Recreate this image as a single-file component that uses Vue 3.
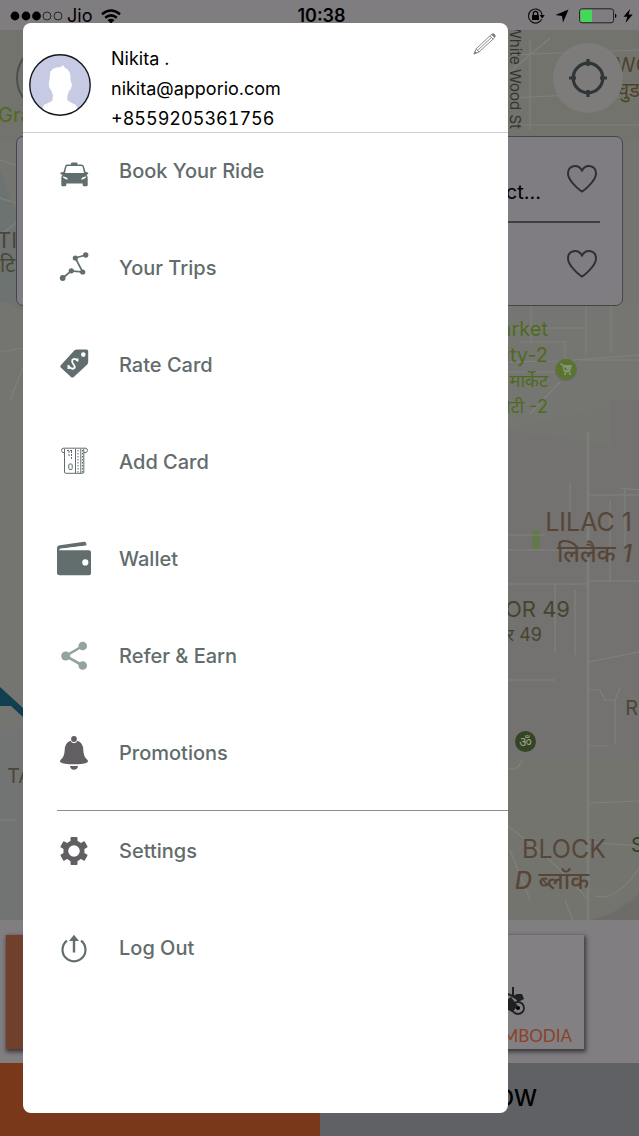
<script setup>
import { ref } from 'vue'

const user = { name: 'Nikita .', email: 'nikita@apporio.com', phone: '+8559205361756' }

const mainItems = [
  { id: 'taxi', label: 'Book Your Ride' },
  { id: 'trips', label: 'Your Trips' },
  { id: 'tag', label: 'Rate Card' },
  { id: 'card', label: 'Add Card' },
  { id: 'wallet', label: 'Wallet' },
  { id: 'share', label: 'Refer & Earn' },
  { id: 'bell', label: 'Promotions' },
]
const accountItems = [
  { id: 'gear', label: 'Settings' },
  { id: 'logout', label: 'Log Out' },
]
const groups = [mainItems, accountItems]
const active = ref('')
</script>

<template>
  <div class="screen">
    <header class="status">
      <div class="status-left">
        <svg class="dots" width="54" height="12" viewBox="0 0 54 12">
          <circle cx="5" cy="6" r="4.4" /><circle cx="16" cy="6" r="4.4" /><circle cx="26.500" cy="6" r="4.400" />
          <g fill="none" stroke="#111" stroke-width=".8"><circle cx="37" cy="6" r="4" /><circle cx="48" cy="6" r="4" /></g>
        </svg>
        <span>Jio</span>
        <svg class="wifi" width="20" height="15" viewBox="0 0 20 15">
          <g fill="none" stroke="#000" stroke-width="2.500"><path d="M1 5.200Q10-2.300 19 5.200" /><path d="M4.200 8.800Q10 4 15.800 8.800" /></g>
          <path d="M6.500 11Q10 8.300 13.500 11L10 14.600Z" />
        </svg>
      </div>
      <time>10:38</time>
      <div class="status-right">
        <svg width="18" height="16" viewBox="0 0 18 16">
          <path d="M14.500 4.500A7 7 0 1 0 14.700 11.200M15 8.500A7 7 0 0 0 14 4" fill="none" stroke="#111" stroke-width="1.200" />
          <path d="M12.700 7h5l-2.500 3.400Z" /><rect x="5" y="7" width="7" height="5" rx=".6" />
          <path d="M6.300 7.500V5.600a2.200 2.200 0 0 1 4.400 0V7.500" fill="none" stroke="#000" stroke-width="1.300" />
        </svg>
        <svg class="nav-arrow" width="14" height="14" viewBox="0 0 14 14"><path d="M13.500.5L8 13.500 7 7 .5 6Z" /></svg>
        <svg class="battery" width="38" height="16" viewBox="0 0 38 16">
          <rect x=".6" y=".8" width="34" height="14" rx="2.500" fill="none" stroke="#222" />
          <rect x="1.500" y="1.700" width="11.500" height="12.200" rx="1" fill="#43d957" /><path d="M36 5.500q3 2.300 0 4.600Z" />
        </svg>
        <svg width="10" height="14" viewBox="0 0 10 14"><path d="M7 0L.5 7.800H4.300L2.500 14 9.700 5.600H5.700Z" /></svg>
      </div>
    </header>

    <main class="map">
      <svg class="terrain" viewBox="0 0 639 890" preserveAspectRatio="xMidYMin slice">
        <rect width="639" height="890" fill="#747470" />
        <path d="M0 0H639V110H0Z" fill="#73736d" />
        <path d="M500 275H639V370L500 400Z" fill="#757672" />
        <path d="M500 400L610 415V370H639V890H500Z" fill="#737270" />
        <path d="M0 140L23 200V280L0 270Z" fill="#6d7371" />
        <path d="M0 700H24V890H0Z" fill="#717472" />
        <path d="M500 730H639V860Q622 880 596 890H500Z" fill="#74746f" />
        <path d="M590 890Q622 882 639 864V890Z" fill="#6d6c69" />
        <path d="M532 500h8v19h-8Z" fill="#65784d" />
        <g fill="none" stroke="#80807c" stroke-width="1.200">
          <path d="M508 25L639 20M508 68L639 62M530 10V100M508 95H639M500 50L550 8M0 130L23 138M0 168L23 175M0 205L23 188M0 322L23 318M10 370L23 338M0 790H15" />
          <path d="M531 275V315M508 298H584M586 275V325M611 275V323M500 342H565V312H520M500 332L560 331 639 325M578 330H639M530 384L560 352" />
          <path d="M500 554H588M588 632L639 622M588 551H639M555 555V623M575 560V625M500 650H555M500 520H585M610 470V552M508 505H545M588 465H639" />
          <path d="M590 660H600L605 670H615L620 658M615 670V714M590 716H608M590 773L639 771M588 812L639 816M595 866Q617 872 639 838M620 458L639 460M508 738Q518 742 522 730" />
          <path d="M500 790Q560 835 588 870M530 870L510 820M565 870L573 890M570 453V500M625 460V520" />
        </g>
        <path d="M588 402V890" stroke="#7c7c79" stroke-width="3" />
        <path d="M0 657L23 678V687L11 676H0Z" fill="#123f50" />
      </svg>

      <span class="label green gra">Gra</span>
      <span class="label brown tii">TII</span>
      <span class="label brown tii-hi">टि</span>
      <span class="label brown ta">TA</span>
      <span class="label street">White Wood St</span>
      <span class="label brown wo">WO</span>
      <span class="label brown wo-hi">वुड</span>
      <div class="label green market"><span>Market</span><span>City-2</span><span class="hi">मार्केट</span><span class="hi">सिटी -2</span></div>
      <div class="label rust lilac"><span>LILAC 1</span><span class="hi">लिलैक <i>1</i></span></div>
      <div class="label olive sector"><span>SECTOR 49</span><span class="small">सेक्टर 49</span></div>
      <span class="label brown r">R</span>
      <span class="label darkgreen s">S</span>
      <div class="label rust block"><span>BLOCK</span><span class="hi"><i>D</i> ब्लॉक</span></div>
      <svg class="pin shop" width="24" height="26" viewBox="0 0 24 26">
        <circle cx="12" cy="13" r="11" fill="#676b5b" /><circle cx="12" cy="12" r="10" fill="#59752a" />
        <path d="M6 7h2.500l2 8h6M9 8.500h8.500l-1.500 5h-6Z" fill="#86907a" stroke="#86907a" /><circle cx="11" cy="17" r="1.200" fill="#86907a" /><circle cx="16" cy="17" r="1.200" fill="#86907a" />
      </svg>
      <span class="pin om">ॐ</span>

      <div class="map-tools">
        <button class="round menu" aria-label="Menu"></button>
        <button class="round locate" aria-label="My location">
          <svg width="38" height="38" viewBox="0 0 38 38" fill="none" stroke="#303638" stroke-width="3.200"><circle cx="19" cy="19" r="14.800" /><path d="M19 0V7M19 31v7M0 19h7M31 19h7" /></svg>
        </button>
      </div>
      <section class="places">
        <div v-for="n in 2" :key="n" class="place">
          <span>{{ n === 1 ? 'ct...' : '' }}</span>
          <button class="heart" :aria-label="'Save place ' + n">
            <svg width="30" height="28" viewBox="0 0 30 28"><path d="M15 26.500C13 25.500 1 16 1 8.500 1 0 11 -1.500 15 5.500 19-1.500 29 0 29 8.500 29 16 17 25.500 15 26.500Z" fill="none" stroke="#303033" stroke-width="2" /></svg>
          </button>
        </div>
      </section>
    </main>

    <section class="vehicles">
      <div class="vehicle selected"></div>
      <div class="vehicle"></div>
      <div class="vehicle">
        <svg width="80" height="32" viewBox="0 0 80 32">
          <circle cx="67" cy="23" r="6" fill="none" stroke="#222226" stroke-width="1.800" /><circle cx="67" cy="23" r="2" />
          <path d="M20 16L46 14 54 16 60 12 67 21 61 27 52 22 46 20 38 27 20 26ZM62 11l4-2 5 0 2 5-6 3Z" fill="#202024" />
          <path d="M62 2v9M57 9l8 4M66 14l6-1" stroke="#202024" stroke-width="2" />
        </svg>
        <span>CAMBODIA</span>
      </div>
    </section>

    <footer class="actions">
      <button class="later">RIDE LATER</button>
      <button class="now">RIDE NOW</button>
    </footer>

    <aside class="drawer">
      <div class="profile">
        <svg class="avatar" width="62" height="62" viewBox="0 0 62 62">
          <defs><clipPath id="face"><circle cx="31" cy="31" r="30" /></clipPath></defs>
          <circle cx="31" cy="31" r="30" fill="#c6cae2" />
          <path clip-path="url(#face)" d="M21 21Q21 13 32 13L34 11 36 14Q42 16 41.500 26L43 31Q42 36 40 37 37 44 39 47L47 51 52 62H10L15 51 23 47Q25 42 22.500 37 19 34 20 29Z" fill="#fff" />
          <circle cx="31" cy="31" r="30.200" fill="none" stroke="#15171d" stroke-width="1.400" />
        </svg>
        <div class="who"><span>{{ user.name }}</span><span>{{ user.email }}</span><span class="phone">{{ user.phone }}</span></div>
        <button class="edit" aria-label="Edit profile">
          <svg width="24" height="22" viewBox="0 0 24 22" fill="none" stroke="#8b8b8f" stroke-width="1"><path d="M1 21L3.200 15.800 18 1.800Q20 0 21.500 1.500 23 3 21.200 5L6 19ZM3.200 15.800L6 19M17 3l3.200 3M4.800 17.300L18.500 4.400" /><path d="M18.500 1.500L21.500 4.500 22 2 20.500 1Z" fill="#777" /><path d="M1 21l1-2.500 1.500 1.500Z" fill="#777" /></svg>
        </button>
      </div>

      <nav>
        <ul v-for="(group, g) in groups" :key="g">
          <li v-for="item in group" :key="item.id">
            <button class="item" @click="active = item.id">
              <svg class="icon" width="36" height="36" viewBox="0 0 36 36" fill="#626e6e">
                <g v-if="item.id === 'taxi'">
                  <path d="M15 12V10.500Q15 9.500 16.500 9.500H20Q21.500 9.500 21.500 10.500V12Z" />
                  <path fill-rule="evenodd" d="M11 11.500H25.500Q27.300 11.500 28 13.500L29.500 19 31 19.200Q32.500 19.500 32.300 21L30.500 21.800Q31.700 23 31.700 25V32Q31.700 33.300 30.500 33.300H28Q26.700 33.300 26.700 32V30.500H10.300V32Q10.300 33.300 9 33.300H6.500Q5.300 33.300 5.300 32V25Q5.300 23 6.500 21.800L4.300 21Q4 19.500 5.500 19.200L7.500 19 9 13.500Q9.500 11.500 11 11.500ZM11.700 13Q10.700 13 10.300 14.300L9 20H28L26.700 14.300Q26.300 13 25.300 13ZM6.700 23.500Q7.500 26 12 26.500 11 23.500 6.700 23.500ZM30.300 23.500Q26 23.500 25 26.500 29.500 26 30.300 23.500Z" />
                </g>
                <g v-else-if="item.id === 'trips'">
                  <path d="M6.700 28L15.300 20.800 26.700 22 19.300 8 29.700 5" fill="none" stroke="#626e6e" stroke-width="1.700" />
                  <circle cx="6.700" cy="28" r="2.900" /><circle cx="15.300" cy="20.800" r="2.600" /><circle cx="26.700" cy="22" r="2.600" /><circle cx="19.300" cy="8" r="2.600" /><circle cx="29.700" cy="5" r="2.700" />
                </g>
                <g v-else-if="item.id === 'tag'">
                  <path fill-rule="evenodd" d="M18.500 3.200Q19.500 2.500 21 2.500H30.500Q32.200 2.500 32.200 4V15Q32.200 16.500 31 17.700L17.500 30.200Q16.300 31 15 30L4.700 20.500Q3.700 19.300 5 18ZM27.300 5.300A2.300 2.300 0 1 0 27.300 9.900 2.300 2.300 0 1 0 27.300 5.300Z" />
                  <path d="M21.500 13.500Q18 10.500 16.300 13 15.500 15 17.500 17.500 20 20.500 17.500 21.500 15.500 22.500 12.500 19M21.500 11.500V14.500M12.500 18V22" fill="none" stroke="#fff" stroke-width="1.900" />
                </g>
                <g v-else-if="item.id === 'card'" fill="none" stroke="#626e6e" stroke-width="1">
                  <path d="M8.500 8.500H7A2.300 2.300 0 0 1 7 4.200H30A2.300 2.300 0 0 1 30 8.500H27.800M8.500 5V28Q8.500 29.300 9.800 29.300H26.500Q27.800 29.300 27.800 28V5M19.500 5V29M24.800 5V29" />
                  <path d="M22 6V29M26.500 6V29" stroke-dasharray="1.500 1.500" /><rect x="12.800" y="20" width="3.400" height="5.500" rx="1" /><path d="M13 7v5M15.500 7v8M11 6.500h5" stroke-dasharray="2 1" />
                </g>
                <g v-else-if="item.id === 'wallet'">
                  <path fill-rule="evenodd" d="M3 9.300H33Q35 9.300 35 11.300V32Q35 34.300 33 34.300H3.500Q1 34.300 1 32V7.500Q1 4.700 4 4.300L28 .8Q30.500.6 30.500 4.500L5 7.700Q3 8 3 9.300ZM29.300 18.300A3.100 3.100 0 1 0 29.300 24.500 3.100 3.100 0 1 0 29.300 18.300Z" />
                  <path d="M4 8.400L31 5" stroke="#fff" stroke-width="1.200" />
                </g>
                <g v-else-if="item.id === 'share'" fill="#92a3a1">
                  <path d="M26.700 8L9.700 18 26.700 27.500" fill="none" stroke="#92a3a1" stroke-width="2.600" /><circle cx="26.700" cy="8" r="4.300" /><circle cx="9.700" cy="18" r="4.500" /><circle cx="26.700" cy="27.500" r="4.300" />
                </g>
                <g v-else-if="item.id === 'bell'" fill="#625f63">
                  <circle cx="18" cy="4" r="2.900" /><path d="M14.500 5.800Q15.500 8.200 18 8.200 20.500 8.200 21.500 5.800 27 7.500 27.300 15 27.500 22 31.500 25 33.500 28 27 28.800 18 29.800 9 28.800 2.500 28 4.500 25 8.500 22 8.700 15 9 7.500 14.500 5.800ZM14 31H22Q21.500 34.800 18 34.800 14.500 34.800 14 31Z" />
                </g>
                <g v-else-if="item.id === 'gear'">
                  <g fill="#625f63"><rect v-for="a in 6" :key="a" x="14.500" y="4" width="7" height="8" rx="1" :transform="`rotate(${a * 60} 18 18)`" /></g>
                  <circle cx="18" cy="18" r="8.200" fill="none" stroke="#625f63" stroke-width="4.800" />
                </g>
                <g v-else>
                  <path d="M11 10.700A11.500 11.500 0 1 0 25 10.700" fill="none" stroke="#626e6e" stroke-width="2.200" /><path d="M18 4.800L23 11H19.200V22.500H16.800V11H13Z" />
                </g>
              </svg>
              <span>{{ item.label }}</span>
            </button>
          </li>
        </ul>
      </nav>
    </aside>
  </div>
</template>

<style>
body { margin: 0; }
</style>

<style scoped>
.screen { position: relative; min-height: 100vh; display: flex; flex-direction: column; overflow: hidden; background: #807e81; font-family: Inter, "Noto Sans", sans-serif; color: #000; }
* { box-sizing: border-box; }
button { margin: 0; padding: 0; border: 0; background: none; font: inherit; color: inherit; }
svg { display: block; flex: none; }

.status { height: 30px; display: grid; grid-template-columns: 1fr auto 1fr; align-items: center; padding: 2px 6px 0 10px; background: #807d80; font-size: 18px; line-height: 28px; }
.status time { font-weight: 600; }
.status-left, .status-right { display: flex; align-items: center; }
.status-left { gap: 3px; }
.wifi { margin-left: 6px; }
.status-right { justify-content: flex-end; gap: 10px; }
.battery { margin-right: -4px; }

.map { position: relative; flex: 1; min-height: 890px; padding: 13px 16px; overflow: hidden; }
.terrain { position: absolute; inset: 0; width: 100%; height: 100%; }
.label { position: absolute; font-size: 20px; line-height: 26px; white-space: nowrap; }
.label > span { display: block; }
.green { color: #4f6a20; }
.darkgreen { color: #2c4528; }
.brown { color: #4b4636; }
.olive { color: #45452f; }
.rust { color: #574638; font-size: 25px; line-height: 32px; text-align: right; }
.rust .hi { font-size: 24px; font-weight: 500; }
.gra { left: -2px; top: 72px; }
.tii { left: -3px; top: 197px; font-size: 22px; }
.tii-hi { left: 0; top: 222px; }
.ta { left: 7px; top: 733px; }
.street { right: 115px; top: -6px; writing-mode: vertical-rl; font-size: 15px; line-height: 18px; color: #343436; }
.wo { left: 616px; top: 22px; color: #4c442a; }
.wo-hi { left: 618px; top: 47px; color: #4c442a; }
.market { right: 91px; top: 286px; text-align: right; }
.market .hi { font-size: 18px; }
.lilac { right: 7px; top: 476px; }
.sector { right: 69px; top: 566px; font-size: 22px; text-align: right; }
.sector .small { font-size: 18px; margin-right: 28px; }
.r { right: 1px; top: 665px; }
.s { left: 631px; top: 802px; }
.block { right: 33px; top: 803px; }
.block .hi { margin-right: 17px; }
.pin { position: absolute; }
.shop { right: 61px; top: 327px; }
.om { right: 103px; top: 701px; width: 21px; height: 21px; border-radius: 50%; background: #344524; color: #9a9d8c; font-size: 14px; line-height: 22px; text-align: center; }

.map-tools { position: relative; display: flex; justify-content: space-between; }
.round { width: 70px; height: 70px; border-radius: 50%; display: grid; place-items: center; }
.menu { border: 2px solid #4c5052; }
.locate { background: #7d7c7b; }
.places { position: relative; margin-top: 23px; padding: 0 22px; border: 1px solid #47474a; border-radius: 7px; background: #7f7d81; }
.place { display: flex; align-items: center; justify-content: flex-end; gap: 26px; height: 84px; padding-right: 3px; font-size: 20px; }
.place + .place { border-top: 2px solid #3f3f42; }
.place span { padding-top: 26px; }

.vehicles { display: grid; grid-template-columns: repeat(3, 1fr); gap: 10px; padding: 15px 55px 14px 6px; background: #807e81; }
.vehicle { height: 114px; padding: 50px 12px 0; background: #828083; box-shadow: 1px 2px 4px 1px #3a393c; display: flex; flex-direction: column; align-items: flex-end; gap: 8px; font: 17px/22px Lato, sans-serif; color: #8a4228; }
.vehicle svg { align-self: center; }
.selected { background: #70402c; }

.actions { display: grid; grid-template-columns: 1fr 1fr; height: 73px; font-size: 23px; font-weight: 500; }
.actions button { padding-bottom: 4px; }
.later { background: #7a381a; }
.now { background: #5f6165; }

.drawer { position: absolute; top: 23px; bottom: 23px; left: 23px; right: 131px; border-radius: 8px; background: #fff; overflow: hidden; }
.profile { display: flex; align-items: flex-start; height: 110px; padding: 10px 11px 0 6px; border-bottom: 1px solid #d0d0d0; }
.avatar { margin-top: 21px; }
.who { flex: 1; margin: 11px 0 0 20px; display: flex; flex-direction: column; font-size: 18px; line-height: 30px; }
.phone { font-variant-numeric: tabular-nums; }
ul { list-style: none; margin: 0; padding: 20px 0 0 33px; display: flex; flex-direction: column; gap: 61px; }
ul + ul { margin: 39px 0 0 34px; padding: 22px 0 0; border-top: 1px solid #8e8e90; }
ul + ul .item { margin-left: -1px; }
.item { display: flex; align-items: center; gap: 27px; height: 36px; font-size: 20px; line-height: 26px; font-weight: 500; color: #626c6c; text-align: left; }
</style>
